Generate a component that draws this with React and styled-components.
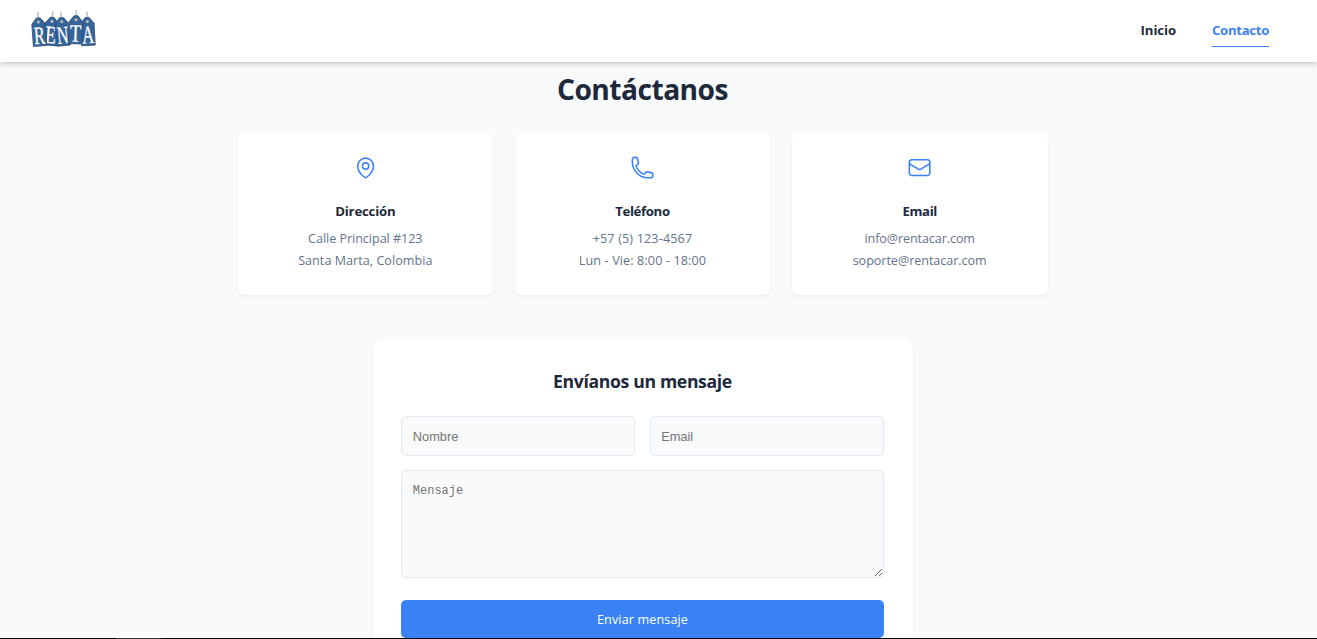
import React from "react";
import styled, { createGlobalStyle } from "styled-components";
import { HiOutlineMapPin, HiOutlinePhone, HiOutlineEnvelope } from "react-icons/hi2";

const GlobalStyle = createGlobalStyle`
  *, *::before, *::after { box-sizing: border-box; }
  html, body { margin: 0; padding: 0; height: 100%; overflow: hidden; }
  body {
    background: #f8fafc;
    color: #1e293b;
    font-family: "Open Sans", "Noto Sans", sans-serif;
  }
  h1, h2, h3, p { margin: 0; }
`;

const Page = styled.div`
  height: 639px;
  display: flex;
  flex-direction: column;
  overflow: hidden;
`;

const Header = styled.header`
  flex: none;
  height: 62px;
  padding: 0 48px 0 28px;
  display: flex;
  align-items: flex-start;
  justify-content: space-between;
  background: #fff;
  box-shadow: 0 2px 5px rgba(0, 0, 0, 0.2);
  position: relative;
`;

const LogoMark = styled.svg`
  display: block;
  width: 72px;
  height: 40px;
  margin-top: 9px;
`;

const Nav = styled.nav`
  display: flex;
  gap: 36px;
  padding-top: 17px;
`;

const NavLink = styled.a`
  height: 30px;
  line-height: 26px;
  font-size: 13.2px;
  font-weight: 700;
  letter-spacing: ${(p) => p.$track || "0"};
  color: ${(p) => (p.$active ? "#3b82f6" : "#1e293b")};
  border-bottom: 1px solid ${(p) => (p.$active ? "#3b82f6" : "transparent")};
  text-decoration: none;
`;

const Main = styled.main`
  flex: 1;
  min-height: 0;
  overflow: hidden;
  width: 1285px;
  display: flex;
  flex-direction: column;
  align-items: center;
`;

const Title = styled.h1`
  flex: none;
  margin-top: 5px;
  height: 44px;
  line-height: 44px;
  font-size: 28.2px;
  font-weight: 700;
  letter-spacing: ${(p) => p.$track || "0"};
`;

const CardGrid = styled.section`
  flex: none;
  margin-top: 22px;
  width: 810px;
  display: grid;
  grid-template-columns: repeat(3, 1fr);
  gap: 21.6px;
`;

const Card = styled.article`
  height: 162px;
  padding-top: 22px;
  display: flex;
  flex-direction: column;
  align-items: center;
  background: #fff;
  border-radius: 7px;
  box-shadow: 0 2px 4px rgba(0, 0, 0, 0.05);

  svg { color: #3b82f6; }
`;

const CardTitle = styled.h3`
  margin: 20px 0 6px;
  line-height: 22px;
  font-size: 13.2px;
  font-weight: 700;
  letter-spacing: ${(p) => p.$track || "0"};
`;

const CardLine = styled.p`
  line-height: 22px;
  font-size: 12.6px;
  color: #64748b;
  letter-spacing: ${(p) => p.$track || "0"};
`;

const FormCard = styled.form`
  flex: none;
  margin-top: 44px;
  width: 540px;
  height: 328px;
  padding: 28px 28.8px;
  display: flex;
  flex-direction: column;
  background: #fff;
  border-radius: 9px;
  box-shadow: 0 2px 4px rgba(0, 0, 0, 0.05);
`;

const FormTitle = styled.h2`
  height: 29px;
  line-height: 29px;
  text-align: center;
  font-size: 17.6px;
  font-weight: 700;
  letter-spacing: ${(p) => p.$track || "0"};
`;

const FieldRow = styled.div`
  margin: 20px 0 14px;
  display: grid;
  grid-template-columns: 1fr 1fr;
  gap: 14.4px;
`;

const Input = styled.input`
  width: 100%;
  height: 40px;
  padding: 1px 10.5px 0;
  border: 1px solid #e2e8f0;
  border-radius: 5px;
  background: #f8fafc;
  font-family: "Liberation Sans", sans-serif;
  font-size: 12.8px;
  &::placeholder { color: #757575; }
`;

const TextArea = styled.textarea`
  flex: none;
  display: block;
  width: 100%;
  height: 108px;
  padding: 12px 10.5px;
  border: 1px solid #e2e8f0;
  border-radius: 5px;
  background: #f8fafc;
  font-family: "Liberation Mono", monospace;
  font-size: 12px;
  line-height: 17px;
  resize: vertical;
  &::placeholder { color: #757575; }
`;

const Submit = styled.button`
  flex: none;
  margin-top: 22px;
  height: 38px;
  padding: 0;
  border: 0;
  border-radius: 5px;
  background: #3b82f6;
  color: #fff;
  font-family: inherit;
  font-size: 12.6px;
  letter-spacing: ${(p) => p.$track || "0"};
`;

const BottomEdge = styled.footer`
  flex: none;
  height: 1px;
  background: linear-gradient(to right, #050505 116px, #333 116px, #333 160px, #1c1c1c 160px, #1c1c1c 164px, #050505 164px);
`;

const TAGS = [
  { letter: "E", x: 24, y: 12.4, tilt: 5, width: 11 },
  { letter: "R", x: 10.4, y: 13, tilt: -4, width: 11 },
  { letter: "N", x: 33.7, y: 12.7, tilt: -5, width: 11.5 },
  { letter: "A", x: 59.3, y: 12.5, tilt: -3, width: 12 },
  { letter: "T", x: 48, y: 10.8, tilt: 2, width: 11.5 },
];

function Logo() {
  return (
    <LogoMark viewBox="0 0 72 40" role="img" aria-label="Renta">
      {TAGS.map(({ letter, x, y, tilt, width }) => (
        <g key={letter} transform={`translate(${x} ${y}) rotate(${tilt})`}>
          <path d="M0 -10V-1" stroke="#b9c1ca" strokeWidth="1.5" />
          <path
            d="M-2 -4H2L6.7 2V24H-6.7V2Z"
            fill="#35659b"
            stroke="#2f4d70"
            strokeWidth="0.8"
            strokeLinejoin="round"
          />
          <circle cx="0" cy="0" r="1.5" fill="#cfd3d6" stroke="#6d7780" strokeWidth="0.6" />
          <text
            x="0"
            y="21.8"
            textAnchor="middle"
            fontFamily="'Liberation Serif', serif"
            fontSize="25"
            fill="#fff"
            stroke="#fff"
            strokeWidth="0.3"
            textLength={width}
            lengthAdjust="spacingAndGlyphs"
          >
            {letter}
          </text>
        </g>
      ))}
    </LogoMark>
  );
}

const CONTACTS = [
  {
    Icon: HiOutlineMapPin,
    title: "Dirección",
    track: "-0.2px",
    lines: [
      { text: "Calle Principal #123", track: "-0.05px" },
      { text: "Santa Marta, Colombia", track: "0.03px" },
    ],
  },
  {
    Icon: HiOutlinePhone,
    title: "Teléfono",
    track: "-0.35px",
    lines: [
      { text: "+57 (5) 123-4567", track: "0.15px" },
      { text: "Lun - Vie: 8:00 - 18:00", track: "0.12px" },
    ],
  },
  {
    Icon: HiOutlineEnvelope,
    title: "Email",
    track: "-0.35px",
    lines: [
      { text: "info@rentacar.com", track: "-0.1px" },
      { text: "soporte@rentacar.com", track: "-0.05px" },
    ],
  },
];

export default function App() {
  return (
    <>
      <GlobalStyle />
      <Page>
        <Header>
          <Logo />
          <Nav>
            <NavLink $track="-0.1px">Inicio</NavLink>
            <NavLink $active $track="-0.33px">Contacto</NavLink>
          </Nav>
        </Header>
        <Main>
          <Title $track="-0.55px">Contáctanos</Title>
          <CardGrid>
            {CONTACTS.map(({ Icon, title, track, lines }) => (
              <Card key={title}>
                <Icon size={25.2} />
                <CardTitle $track={track}>{title}</CardTitle>
                {lines.map((line) => (
                  <CardLine key={line.text} $track={line.track}>{line.text}</CardLine>
                ))}
              </Card>
            ))}
          </CardGrid>
          <FormCard>
            <FormTitle $track="-0.34px">Envíanos un mensaje</FormTitle>
            <FieldRow>
              <Input placeholder="Nombre" />
              <Input placeholder="Email" />
            </FieldRow>
            <TextArea placeholder="Mensaje" />
            <Submit type="button" $track="0.12px">Enviar mensaje</Submit>
          </FormCard>
        </Main>
        <BottomEdge />
      </Page>
    </>
  );
}
